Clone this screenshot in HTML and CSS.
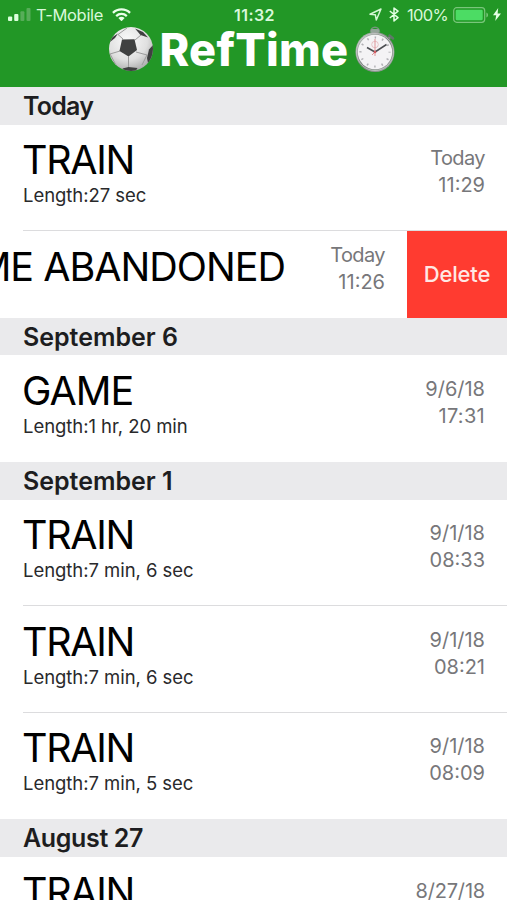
FILE: index.html
```html
<!DOCTYPE html>
<html lang="en">
<head>
<meta charset="utf-8">
<title>RefTime</title>
<link rel="stylesheet" href="styles.css">
</head>
<body>
<main class="screen">
  <header class="navbar">
    <div class="status">
      <div class="status-left">
        <svg class="signal" width="24" height="14" viewBox="0 0 24 14"><g fill="#dcffdc"><rect x="0" y="8.5" width="4.2" height="4.5" rx="1"/><rect x="6.2" y="6" width="4.2" height="7" rx="1"/></g><g fill="#57ad59"><rect x="12.4" y="3.3" width="4" height="9.7" rx="1"/><rect x="18.5" y="0" width="4" height="13" rx="1"/></g></svg>
        <span class="carrier">T-Mobile</span>
        <svg class="wifi" width="19" height="13.3" viewBox="0 0 20 14"><g fill="none" stroke="#eaffea" stroke-width="2.4"><path d="M1 5.1a13 13 0 0 1 18 0"/><path d="M4.4 8.5a8.2 8.2 0 0 1 11.2 0"/></g><path d="M6.7 10.6a5 5 0 0 1 6.6 0L10 14z" fill="#eaffea"/></svg>
      </div>
      <span class="clock">11:32</span>
      <div class="status-right">
        <svg class="location" width="13" height="13" viewBox="0 0 13 13"><path d="M1 6.3 12 1 7.3 12 6.3 6.7z" fill="none" stroke="#d4f7d4" stroke-width="1.5" stroke-linejoin="round"/></svg>
        <svg class="bluetooth" width="10" height="15" viewBox="0 0 10 15"><path d="M.8 4 9 10.7 5 14V1l4 3.2L.8 11" fill="none" stroke="#e2ffe2" stroke-width="1.5" stroke-linejoin="round"/></svg>
        <span class="percent">100%</span>
        <svg class="battery" width="36" height="16" viewBox="0 0 36 16"><rect x=".7" y=".7" width="31" height="14.6" rx="3" fill="none" stroke="#79c67b" stroke-width="1.2"/><rect x="2.7" y="2.7" width="27" height="10.6" rx="1.4" fill="#4cdc64"/><path d="M33.4 5.5c2.2.7 2.2 4.3 0 5z" fill="#79c67b"/></svg>
        <svg class="bolt" width="8" height="13" viewBox="0 0 8 13"><path d="M5.2 0 0 7.3h3.2L2.2 13 8 5.4H4.6z" fill="#e6ffe6"/></svg>
      </div>
    </div>
    <h1 class="brand">
      <svg class="ball" width="46" height="46" viewBox="0 0 46 46">
        <defs>
          <radialGradient id="leather" cx=".42" cy=".3" r=".75"><stop offset="0" stop-color="#fafafa"/><stop offset=".6" stop-color="#e0e0e0"/><stop offset="1" stop-color="#a5a5a5"/></radialGradient>
          <clipPath id="round"><circle cx="23" cy="22" r="22"/></clipPath>
        </defs>
        <circle cx="23" cy="22" r="22" fill="url(#leather)"/>
        <g clip-path="url(#round)">
          <path d="M15 12 10 7.500M27 13l6-5M12 24 2 27M28 25l11 3M20.500 29.500V41M10 7.500 19 1M2 27l6 11M39 28l-5 10" fill="none" stroke="#9b9b9b" stroke-width="1"/>
          <g fill="#3f4040"><path d="M14 12.500 26.500 12.300 29 23 20.500 29.500 11.500 24z"/><path d="M27 1.500l8 3.500 5 5.500-7.500-2.500z"/><path d="M45.500 17.500l-4.500 5-2 8.500 1 5 6-6z"/><path d="M14.500 41.500l6-1.500 9 1-3 5H17z"/><path d="M-1 18l4-7 7-4.500-3 4.500-5 4z"/></g>
        </g>
      </svg>
      <span class="brand-name">RefTime</span>
      <svg class="stopwatch" width="42" height="48" viewBox="0 0 42 48">
        <defs><linearGradient id="metal" x1="0" y1="0" x2="1" y2="1"><stop offset="0" stop-color="#c3c9c6"/><stop offset=".5" stop-color="#77807b"/><stop offset="1" stop-color="#a4aaa7"/></linearGradient></defs>
        <path d="M15.500 6.500c0-7 9-7 9 0" fill="none" stroke="#75967b" stroke-width="1.600"/>
        <rect x="16" y="3" width="8" height="4" rx="1" fill="#92a599"/>
        <path d="m33 13 3-3" stroke="#88958c" stroke-width="2.500"/><path d="m34.500 9.500 3.500 3" stroke="#60776a" stroke-width="2.500" stroke-linecap="round"/>
        <ellipse cx="20" cy="26" rx="19.500" ry="20" fill="url(#metal)"/><circle cx="20" cy="26" r="18.500" fill="none" stroke="#d0d3d1" stroke-width=".7"/>
        <circle cx="20" cy="26" r="17.200" fill="#f4f3f5"/>
        <circle cx="20" cy="26" r="14.500" fill="none" stroke="#b1b1b5" stroke-width="2.200" stroke-dasharray="1.500 6.090" stroke-dashoffset=".8"/>
        <circle cx="20" cy="18.500" r="3.300" fill="none" stroke="#e5b7bb" stroke-width=".8"/>
        <path d="M20 13v17M20 26l-3 3" stroke="#df9498" stroke-width="1"/>
        <path d="m12 21.500 8 4.500 11.500-7.500" fill="none" stroke="#4d4f53" stroke-width="1.500"/>
        <circle cx="20" cy="26" r="1.300" fill="#d25a60"/>
      </svg>
    </h1>
  </header>

  <h2 class="section tight">Today</h2>
  <article class="row">
    <div class="info"><div class="title">TRAIN</div><div class="length">Length:27 sec</div></div>
    <div class="when"><div class="word">Today</div><div>11:29</div></div>
  </article>
  <article class="row swiped">
    <div class="info"><div class="title wide">GAME ABANDONED</div></div>
    <div class="when"><div class="word">Today</div><div>11:26</div></div>
    <button class="delete">Delete</button>
  </article>
  <h2 class="section loose">September 6</h2>
  <article class="row last">
    <div class="info"><div class="title wide">GAME</div><div class="length">Length:1 hr, 20 min</div></div>
    <div class="when"><div>9/6/18</div><div class="spaced">17:31</div></div>
  </article>
  <h2 class="section loose">September 1</h2>
  <article class="row">
    <div class="info"><div class="title">TRAIN</div><div class="length">Length:7 min, 6 sec</div></div>
    <div class="when"><div>9/1/18</div><div>08:33</div></div>
  </article>
  <article class="row">
    <div class="info"><div class="title">TRAIN</div><div class="length">Length:7 min, 6 sec</div></div>
    <div class="when"><div>9/1/18</div><div>08:21</div></div>
  </article>
  <article class="row last">
    <div class="info"><div class="title">TRAIN</div><div class="length">Length:7 min, 5 sec</div></div>
    <div class="when"><div>9/1/18</div><div>08:09</div></div>
  </article>
  <h2 class="section">August 27</h2>
  <article class="row last">
    <div class="info"><div class="title">TRAIN</div></div>
    <div class="when"><div class="long">8/27/18</div></div>
  </article>
</main>
</body>
</html>
```
FILE: styles.css
```css
* { box-sizing: border-box; }
body { margin: 0; background: #fff; font-family: Inter, "Liberation Sans", sans-serif; }
.screen { width: 507px; height: 900px; overflow: hidden; display: flex; flex-direction: column; }
.screen > * { flex-shrink: 0; }
svg { display: block; flex: none; }

.navbar { height: 87px; background: #229726; color: #fff; }
.status { height: 27px; padding: 2px 6px 0 8px; display: grid; grid-template-columns: 1fr auto 1fr; align-items: center; color: #d9f8da; font-size: 16.5px; line-height: 24px; }
.status-left, .status-right { display: flex; align-items: center; }
.status-right { justify-content: flex-end; }
.carrier { margin-left: 4px; letter-spacing: -.3px; }
.wifi { margin-left: 9px; }
.clock { font-weight: 600; font-size: 16px; line-height: 20px; letter-spacing: .4px; }
.bluetooth { margin-left: 7px; }
.percent { margin-left: 8px; letter-spacing: -.7px; }
.battery { margin-left: 5px; }
.bolt { margin-left: 4px; }
.brand { margin: 0; height: 46px; padding-left: 108px; display: flex; align-items: center; font-size: 45px; line-height: 46px; font-weight: 800; }
.brand-name { margin-left: 5.500px; letter-spacing: .3px; }
.stopwatch { margin-left: 7px; }

.section { margin: 0; height: 37.6px; padding: 0 23px; background: #eaeaec; color: #1d1d20; font-size: 25px; line-height: 39px; font-weight: 600; letter-spacing: -.35px; white-space: nowrap; }
.section.tight { letter-spacing: -.75px; }
.section.loose { letter-spacing: -.02px; }
.row { height: 106.600px; display: flex; justify-content: space-between; padding: 11.400px 22px 0 23px; white-space: nowrap; background: linear-gradient(#dcdcde, #dcdcde) 23px 100% / 100% 1px no-repeat; }
.row.last { background: none; }
.title { font-size: 39.500px; line-height: 48px; color: #000; letter-spacing: -1.300px; margin-left: -1px; }
.title.wide { letter-spacing: -1px; }
.length { font-size: 18.500px; line-height: 23px; color: #29292b; letter-spacing: -.05px; }
.when { padding-top: 9.200px; font-size: 20px; line-height: 27px; color: #77777a; text-align: right; }
.when .word { letter-spacing: -.6px; }
.when .spaced { letter-spacing: .3px; }
.when .long { letter-spacing: -.2px; }
.row.swiped { height: 86.600px; padding: 0; justify-content: flex-end; background: none; }
.swiped > * { flex-shrink: 0; }
.swiped .info { padding-top: 11.500px; }
.swiped .when { width: 122px; padding: 10.500px 22px 0 0; }
.delete { width: 100px; height: 86.600px; margin: 0; padding: 0; border: 0; background: #ff3b30; color: #ffe8e4; font: 500 22px/27px Inter, sans-serif; letter-spacing: -.2px; }
```
